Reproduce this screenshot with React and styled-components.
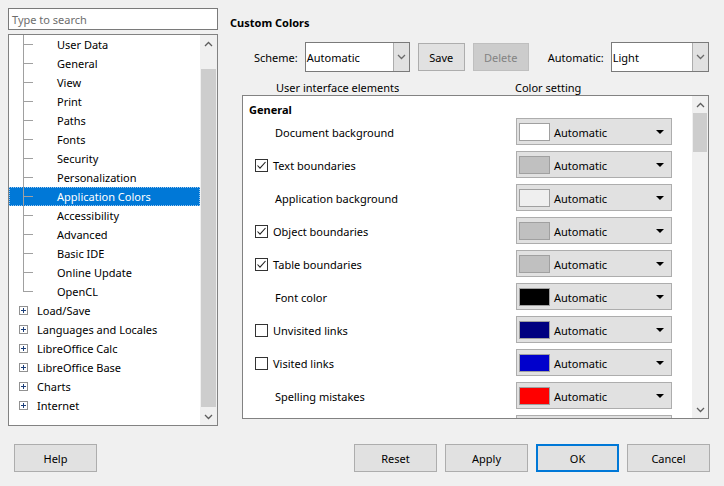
import * as React from 'react';
import styled, { createGlobalStyle } from 'styled-components';

const GlobalStyle = createGlobalStyle`
  html, body {
    margin: 0;
    padding: 0;
    background: #f0f0f0;
  }
  body {
    font-family: 'Noto Sans', 'Open Sans', sans-serif;
    font-size: 11px;
    color: #000;
  }
  * {
    box-sizing: border-box;
  }
`;

const Dialog = styled.div`
  width: 724px;
  height: 486px;
  background: #f0f0f0;
  display: flex;
  flex-direction: column;
  overflow: hidden;
`;
const Main = styled.div`
  display: flex;
  gap: 12px;
  padding: 8px 0 0 8px;
  height: 426px;
`;

/* ---------- left: search + tree ---------- */
const LeftColumn = styled.div`
  width: 210px;
  display: flex;
  flex-direction: column;
  gap: 4px;
`;
const SearchBox = styled.div`
  height: 22px;
  border: 1px solid #7a7a7a;
  background: #fff;
  color: #6d6d6d;
  line-height: 21px;
  padding-left: 3px;
`;
const TreeBox = styled.div`
  flex: 1;
  border: 1px solid #828282;
  background: #fff;
  display: flex;
  overflow: hidden;
`;
const TreeList = styled.div`
  flex: 1;
  overflow: hidden;
`;
const TreeRow = styled.div`
  position: relative;
  height: 19px;
  line-height: 20px;
  padding-left: ${p => (p.child ? 48 : 28)}px;
  white-space: nowrap;
  background: ${p => (p.selected ? '#0078d7' : 'transparent')};
  color: ${p => (p.selected ? '#fff' : '#000')};
  outline: ${p => (p.selected ? '1px dotted #9cc8f0' : 'none')};
  outline-offset: -1px;
  ${p =>
    p.child &&
    `
    &::before {
      content: '';
      position: absolute;
      left: 14px;
      top: 0;
      height: ${p.last ? '10px' : '19px'};
      border-left: 1px solid #a0a0a0;
    }
    &::after {
      content: '';
      position: absolute;
      left: 14px;
      top: 9px;
      width: 10px;
      border-top: 1px solid #a0a0a0;
    }
  `}
`;
const PlusBox = styled.span`
  position: absolute;
  left: 10px;
  top: 5px;
  width: 9px;
  height: 9px;
  border: 1px solid #919191;
  background: #fff;
  &::before {
    content: '';
    position: absolute;
    left: 1px;
    top: 3px;
    width: 5px;
    border-top: 1px solid #1c3f7a;
  }
  &::after {
    content: '';
    position: absolute;
    left: 3px;
    top: 1px;
    height: 5px;
    border-left: 1px solid #1c3f7a;
  }
`;
const ScrollBar = styled.div`
  width: ${p => p.width || 17}px;
  background: #f0f0f0;
  display: flex;
  flex-direction: column;
  align-items: center;
`;
const ScrollArrow = styled.div`
  height: 17px;
  width: 100%;
  display: flex;
  align-items: center;
  justify-content: center;
`;
const ScrollTrack = styled.div`
  flex: 1;
  width: 100%;
  padding: ${p => p.thumbTop}px 1px ${p => p.thumbBottom}px;
  display: flex;
`;
const ScrollThumb = styled.div`
  flex: ${p => (p.size ? 'none' : 1)};
  height: ${p => (p.size ? `${p.size}px` : 'auto')};
  width: 100%;
  background: #cdcdcd;
`;

/* ---------- right: options page ---------- */
const RightColumn = styled.div`
  width: 480px;
  display: flex;
  flex-direction: column;
`;
const Title = styled.div`
  font-weight: bold;
  line-height: 16px;
  margin-top: 7px;
`;
const SchemeRow = styled.div`
  display: flex;
  align-items: center;
  margin-top: 11px;
  padding-left: 24px;
  height: 30px;
`;
const Label = styled.span`
  margin-right: ${p => p.gap || 7}px;
  margin-left: ${p => p.left || 0}px;
  white-space: nowrap;
`;
const Combo = styled.div`
  width: ${p => p.width}px;
  height: 30px;
  border: 1px solid #7a7a7a;
  background: #fff;
  display: flex;
  align-items: stretch;
`;
const ComboText = styled.div`
  flex: 1;
  line-height: 29px;
  padding-left: 1px;
`;
const ComboButton = styled.div`
  width: 16px;
  background: #e1e1e1;
  border-left: 1px solid #adadad;
  display: flex;
  align-items: center;
  justify-content: center;
`;
const Button = styled.div`
  width: ${p => p.width || 83}px;
  height: 28px;
  padding-top: 1px;
  border: ${p => (p.default ? '2px' : '1px')} solid;
  color: ${p => (p.disabled ? '#838383' : '#000')};
  border-color: ${p => (p.disabled ? '#bfbfbf' : p.default ? '#0078d7' : '#adadad')};
  background: ${p => (p.disabled ? '#cccccc' : '#e1e1e1')};
  margin-left: ${p => p.left || 0}px;
  display: flex;
  align-items: center;
  justify-content: center;
  flex: none;
`;
const ColumnHeads = styled.div`
  display: flex;
  height: 23px;
  line-height: 16px;
  padding-top: 8px;
  padding-left: 46px;
`;
const HeadCell = styled.div`
  width: ${p => p.width}px;
`;
const ListBox = styled.div`
  margin-left: 12px;
  width: 467px;
  height: 324px;
  border: 1px solid #828282;
  background: #fff;
  display: flex;
  overflow: hidden;
`;
const ListContent = styled.div`
  flex: 1;
  overflow: hidden;
`;
const GroupHead = styled.div`
  height: 19px;
  padding-top: 6px;
  padding-left: 6px;
  line-height: 16px;
  font-weight: bold;
`;
const ColorRow = styled.div`
  display: flex;
  height: 33px;
  align-items: center;
`;
const RowLabel = styled.div`
  width: 273px;
  display: flex;
  align-items: center;
  padding-left: ${p => (p.check ? 12 : 32)}px;
  padding-top: 1px;
  gap: 5px;
  white-space: nowrap;
`;
const CheckBox = styled.span`
  width: 13px;
  height: 13px;
  border: 1px solid #333;
  background: #fff;
  display: flex;
  align-items: center;
  justify-content: center;
`;
const ColorDrop = styled.div`
  width: 156px;
  height: 27px;
  background: #e1e1e1;
  border: 1px solid #adadad;
  display: flex;
  align-items: center;
  padding-left: 2px;
`;
const Swatch = styled.span`
  width: 31px;
  height: 18px;
  border: 1px solid #a0a0a0;
  background: ${p => p.color};
  margin-right: 4px;
`;
const DropText = styled.span`
  flex: 1;
  padding-top: 1px;
`;
const DropArrow = styled.span`
  width: 0;
  height: 0;
  border-left: 4px solid transparent;
  border-right: 4px solid transparent;
  border-top: 4px solid #000;
  margin-right: 7px;
`;

const Footer = styled.div`
  display: flex;
  align-items: center;
  padding: 18px 14px 0;
`;
const FooterRight = styled.div`
  margin-left: auto;
  display: flex;
  gap: 8px;
`;

const Chevron = ({ up, color = '#5d5d5d' }) => (
  <svg width="9" height="6" viewBox="0 0 9 6">
    <path
      d={up ? 'M1 5 L4.5 1.5 L8 5' : 'M1 1 L4.5 4.5 L8 1'}
      fill="none"
      stroke={color}
      strokeWidth="1.3"
    />
  </svg>
);

const Tick = () => (
  <svg width="11" height="11" viewBox="0 0 11 11">
    <path d="M1.5 5.5 L4 8.2 L9.5 2" fill="none" stroke="#222" strokeWidth="1.1" />
  </svg>
);

const childItems = [
  'User Data',
  'General',
  'View',
  'Print',
  'Paths',
  'Fonts',
  'Security',
  'Personalization',
  'Application Colors',
  'Accessibility',
  'Advanced',
  'Basic IDE',
  'Online Update',
  'OpenCL'
];
const topItems = [
  'Load/Save',
  'Languages and Locales',
  'LibreOffice Calc',
  'LibreOffice Base',
  'Charts',
  'Internet'
];

const colorRows = [
  { label: 'Document background', color: '#ffffff' },
  { label: 'Text boundaries', color: '#c0c0c0', check: true, checked: true },
  { label: 'Application background', color: '#efefef' },
  { label: 'Object boundaries', color: '#c0c0c0', check: true, checked: true },
  { label: 'Table boundaries', color: '#c0c0c0', check: true, checked: true },
  { label: 'Font color', color: '#000000' },
  { label: 'Unvisited links', color: '#000080', check: true },
  { label: 'Visited links', color: '#0000cc', check: true },
  { label: 'Spelling mistakes', color: '#ff0000' }
];

export default function App() {
  return (
    <Dialog>
      <GlobalStyle />
      <Main>
        <LeftColumn>
          <SearchBox>Type to search</SearchBox>
          <TreeBox>
            <TreeList>
              {childItems.map((item, i) => (
                <TreeRow
                  key={item}
                  child
                  last={i === childItems.length - 1}
                  selected={item === 'Application Colors'}
                >
                  {item}
                </TreeRow>
              ))}
              {topItems.map(item => (
                <TreeRow key={item}>
                  <PlusBox />
                  {item}
                </TreeRow>
              ))}
            </TreeList>
            <ScrollBar>
              <ScrollArrow>
                <Chevron up />
              </ScrollArrow>
              <ScrollTrack thumbTop={17} thumbBottom={1}>
                <ScrollThumb />
              </ScrollTrack>
              <ScrollArrow>
                <Chevron />
              </ScrollArrow>
            </ScrollBar>
          </TreeBox>
        </LeftColumn>

        <RightColumn>
          <Title>Custom Colors</Title>
          <SchemeRow>
            <Label>Scheme:</Label>
            <Combo width={105}>
              <ComboText>Automatic</ComboText>
              <ComboButton>
                <Chevron color="#6a6a6a" />
              </ComboButton>
            </Combo>
            <Button width={47} left={8}>
              Save
            </Button>
            <Button width={56} left={8} disabled>
              Delete
            </Button>
            <Label left={19}>Automatic:</Label>
            <Combo width={98}>
              <ComboText>Light</ComboText>
              <ComboButton>
                <Chevron color="#6a6a6a" />
              </ComboButton>
            </Combo>
          </SchemeRow>
          <ColumnHeads>
            <HeadCell width={239}>User interface elements</HeadCell>
            <HeadCell>Color setting</HeadCell>
          </ColumnHeads>
          <ListBox>
            <ListContent>
              <GroupHead>General</GroupHead>
              {colorRows.map(row => (
                <ColorRow key={row.label}>
                  <RowLabel check={row.check}>
                    {row.check && <CheckBox>{row.checked && <Tick />}</CheckBox>}
                    {row.label}
                  </RowLabel>
                  <ColorDrop>
                    <Swatch color={row.color} />
                    <DropText>Automatic</DropText>
                    <DropArrow />
                  </ColorDrop>
                </ColorRow>
              ))}
              <ColorRow>
                <RowLabel />
                <ColorDrop />
              </ColorRow>
            </ListContent>
            <ScrollBar width={16}>
              <ScrollArrow>
                <Chevron up />
              </ScrollArrow>
              <ScrollTrack thumbTop={0} thumbBottom={0}>
                <ScrollThumb size={39} />
              </ScrollTrack>
              <ScrollArrow>
                <Chevron />
              </ScrollArrow>
            </ScrollBar>
          </ListBox>
        </RightColumn>
      </Main>

      <Footer>
        <Button>Help</Button>
        <FooterRight>
          <Button>Reset</Button>
          <Button>Apply</Button>
          <Button default>OK</Button>
          <Button>Cancel</Button>
        </FooterRight>
      </Footer>
    </Dialog>
  );
}
